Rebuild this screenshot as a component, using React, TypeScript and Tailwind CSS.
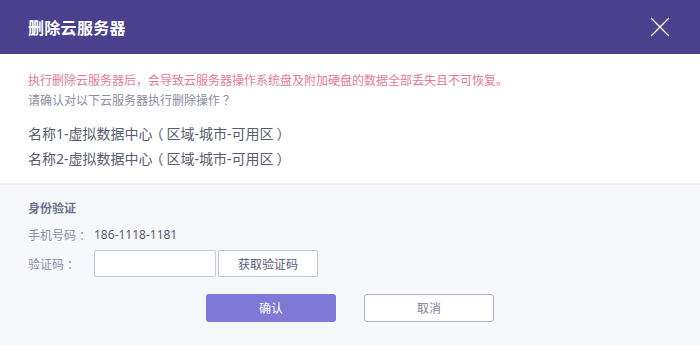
import React from 'react';

const cjk = { fontFamily: '"Noto Sans CJK SC", "Noto Sans", sans-serif' };
const latin = { fontFamily: '"Noto Sans", "Noto Sans CJK SC", sans-serif' };

// fullwidth punctuation drawn half-width and padded so the glyph sits centred in its box
const Punct: React.FC<{ ch: string; l: string; r: string }> = ({ ch, l, r }) => (
  <span className={`inline-block [font-feature-settings:'halt'] ${l} ${r}`}>{ch}</span>
);

const ServerName: React.FC<{ n: number }> = ({ n }) => (
  <li className="text-[14px] leading-6 text-[#585c70]">
    名称<span style={latin}>{n}-</span>虚拟数据中心
    <Punct ch="（" l="pl-[4px]" r="pr-[3px]" />
    区域<span style={latin}>-</span>城市<span style={latin}>-</span>可用区
    <Punct ch="）" l="pl-[3px]" r="pr-[4px]" />
  </li>
);

const App: React.FC = () => {
  return (
    <div
      className="w-[700px] h-[345px] flex flex-col bg-white overflow-hidden [text-spacing-trim:space-all]"
      style={cjk}
    >
      {/* Header */}
      <div className="h-[54px] shrink-0 bg-[#4a408d] flex items-center justify-between pl-7 pr-[30px]">
        <h1 className="text-[16px] font-bold text-white tracking-[0.3px]">删除云服务器</h1>
        <button className="w-[20px] h-[20px] flex items-center justify-center">
          <svg width="20" height="20" viewBox="0 0 20 20">
            <path d="M1 1 L19 19 M19 1 L1 19" stroke="#ffffff" strokeWidth="1.3" fill="none" />
          </svg>
        </button>
      </div>

      {/* Warning */}
      <div className="px-7 pt-4 pb-[12px] border-b-2 border-[#eceef5]">
        <p className="text-[12px] leading-5 text-[#e4799c]">
          执行删除云服务器后，会导致云服务器操作系统盘及附加硬盘的数据全部丢失且不可恢复。
        </p>
        <p className="text-[12px] leading-5 text-[#8b8da8]">
          请确认对以下云服务器执行删除操作
          <Punct ch="？" l="pl-[3px]" r="pr-[3px]" />
        </p>
        <ul className="mt-[11px]">
          <ServerName n={1} />
          <ServerName n={2} />
        </ul>
      </div>

      {/* Verification */}
      <div className="flex-1 bg-[#f7f8fc] px-7 pt-[13px]">
        <h2 className="text-[12px] leading-5 font-bold text-[#6e7190]">身份验证</h2>
        <div className="mt-[7px] flex items-center h-5 text-[12px]">
          <span className="w-[66px] text-[#8b8ea6]">
            手机号码
            <Punct ch="：" l="pl-[3px]" r="pr-[3px]" />
          </span>
          <span className="text-[#585c70]" style={latin}>186-1118-1181</span>
        </div>
        <div className="mt-[5px] flex items-center h-[27px] text-[12px]">
          <span className="w-[66px] text-[#8b8ea6]">
            验证码
            <Punct ch="：" l="pl-[3px]" r="pr-[3px]" />
          </span>
          <input className="w-[122px] h-[27px] bg-white border border-[#c5c8dc] rounded-[2px] outline-none px-2" />
          <button className="ml-[2px] w-[100px] h-[27px] bg-white border border-[#c5c8dc] rounded-[2px] text-[12px] text-[#585c70]">
            获取验证码
          </button>
        </div>
        <div className="mt-[17px] flex justify-center gap-7">
          <button className="w-[130px] h-[28px] rounded-[3px] bg-[#7f78d6] text-white text-[12px]">确认</button>
          <button className="w-[130px] h-[28px] rounded-[3px] bg-white border border-[#a9adc9] text-[#7d8096] text-[12px]">
            取消
          </button>
        </div>
      </div>
    </div>
  );
};

export default App;
